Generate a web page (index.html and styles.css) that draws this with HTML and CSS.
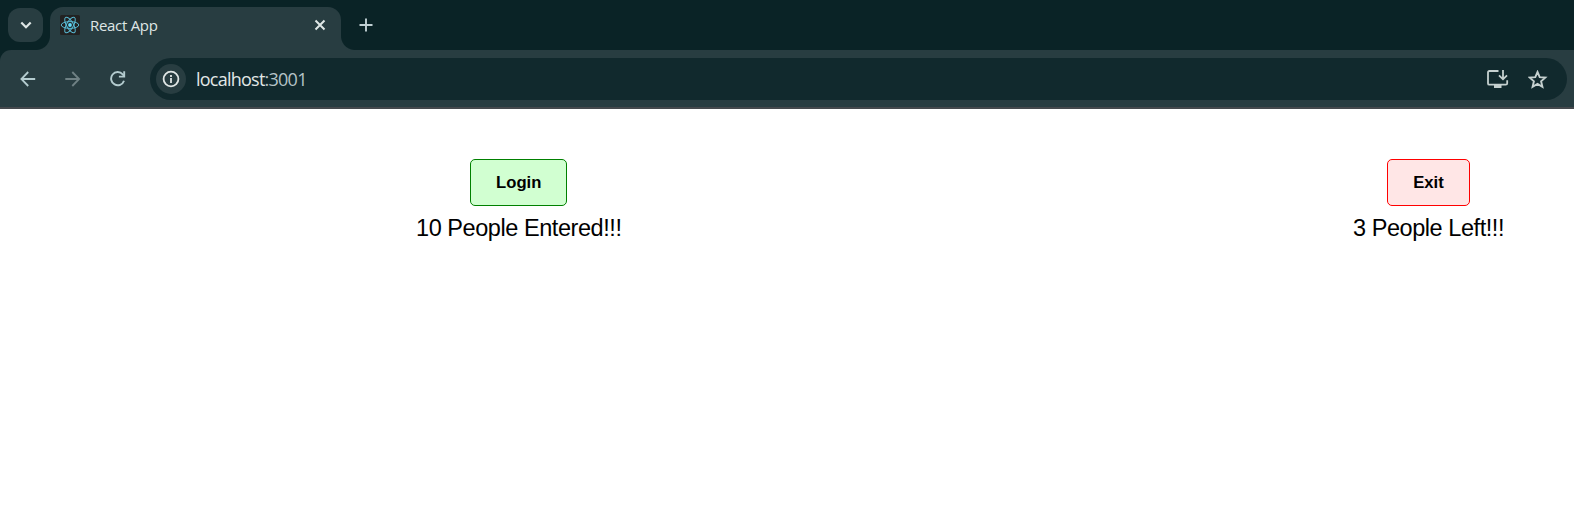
FILE: index.html
```html
<!DOCTYPE html>
<html lang="en">
<head>
<meta charset="utf-8">
<title>React App</title>
<link rel="stylesheet" href="styles.css">
</head>
<body>
<header class="browser">
  <div class="tabstrip">
    <div class="tab-search"><svg width="35" height="34" viewBox="0 0 35 34"><path d="M13.3 14.5l4.7 4.7 4.7-4.7" fill="none" stroke="#dfe7e6" stroke-width="2.2"/></svg></div>
    <div class="tab">
      <svg class="favicon" width="20" height="20" viewBox="0 0 20 20"><rect width="20" height="20" rx="1.5" fill="#222"/><g fill="none" stroke="#58bad4" stroke-width="1"><ellipse cx="10" cy="10" rx="8.8" ry="3.4"/><ellipse cx="10" cy="10" rx="8.8" ry="3.4" transform="rotate(60 10 10)"/><ellipse cx="10" cy="10" rx="8.8" ry="3.4" transform="rotate(120 10 10)"/></g><circle cx="10" cy="10" r="1.9" fill="#61dafb"/></svg>
      <span class="tab-title">React App</span>
      <svg class="close" width="12" height="12" viewBox="0 0 12 12"><path d="M1.5 1.5l9 9M10.5 1.5l-9 9" stroke="#dfe7e6" stroke-width="2"/></svg>
    </div>
    <svg class="new-tab" width="14" height="14" viewBox="0 0 14 14"><path d="M7 .5v13M.5 7h13" stroke="#c0d0d3" stroke-width="1.9"/></svg>
  </div>
  <div class="toolbar">
    <svg class="back" width="16" height="16" viewBox="0 0 16 16"><path d="M15.2 8H1.7M8.2 1L1.4 8l6.8 7" fill="none" stroke="#b4cccf" stroke-width="1.8"/></svg>
    <svg class="forward" width="16" height="16" viewBox="0 0 16 16"><path d="M.3 8h13.5M7.3 1l6.8 7-6.8 7" fill="none" stroke="#6f8184" stroke-width="1.8"/></svg>
    <svg class="reload" width="16" height="16" viewBox="0 0 16 16"><path d="M14 9.7A6.6 6.6 0 1 1 12.7 3.3L14 4.8" fill="none" stroke="#b4cccf" stroke-width="1.9"/><path d="M14.2.2v5.4H8.9" fill="none" stroke="#b4cccf" stroke-width="1.9"/></svg>
    <div class="omnibox">
      <div class="site-info"><svg width="18" height="18" viewBox="0 0 18 18"><circle cx="9" cy="9" r="7.4" fill="none" stroke="#e0e6e5" stroke-width="1.8"/><path d="M9 8v5M9 5v1.9" stroke="#e0e6e5" stroke-width="1.8"/></svg></div>
      <div class="url">localhost<span class="port">:3001</span></div>
      <svg class="install" width="22" height="18" viewBox="0 0 22 18"><path d="M11.5 1H2.4Q1 1 1 2.4v11q0 1.3 1.4 1.3h16.4q1.4 0 1.4-1.4V10.3" fill="none" stroke="#c5d0cf" stroke-width="1.8"/><path d="M7 14h7.5v4H7z" fill="#c5d0cf"/><path d="M16 0v9M12 5.3l4 4 4-4" fill="none" stroke="#c5d0cf" stroke-width="1.8"/></svg>
      <svg class="star" width="20" height="19" viewBox="0 0 20 19"><path d="M9.5 2l2.2 5.1 5.6.5-4.2 3.7 1.3 5.5-4.9-2.9-4.9 2.9 1.3-5.5-4.2-3.7 5.6-.5z" fill="none" stroke="#c5d0cf" stroke-width="1.9"/></svg>
    </div>
  </div>
</header>
<main class="page">
  <section class="counter">
    <button class="btn login">Login</button>
    <div class="message">10 People Entered!!!</div>
  </section>
  <section class="counter">
    <button class="btn exit">Exit</button>
    <div class="message">3 People Left!!!</div>
  </section>
</main>
</body>
</html>
```
FILE: styles.css
```css
* { box-sizing: border-box; }
body { margin: 0; background: #fff; overflow: hidden; font-family: "Liberation Sans", Arial, sans-serif; color: #000; }
svg { display: block; flex: none; }
.browser { height: 109px; background: #0a2326; font-family: "Open Sans", "Noto Sans", sans-serif; }
.tabstrip { height: 50px; display: flex; padding: 7px 0 0 8px; }
.tab-search { width: 35px; height: 34px; margin: 1px 7px 0 0; border-radius: 12px; background: #283d41; }
.tab { position: relative; width: 291px; height: 43px; display: flex; padding: 8px 15px 0 10px; border-radius: 13px 13px 0 0; background: #283d41; }
.tab::before, .tab::after { content: ""; position: absolute; bottom: 0; width: 14px; height: 14px; }
.tab::before { left: -14px; background: radial-gradient(circle at 0 0, transparent 13.5px, #283d41 14.5px); }
.tab::after { right: -14px; background: radial-gradient(circle at 100% 0, transparent 13.5px, #283d41 14.5px); }
.tab-title { margin-left: 10px; line-height: 21px; font-size: 15px; letter-spacing: -0.3px; color: #dfe6e5; white-space: nowrap; }
.close { margin: 4px 0 0 auto; }
.new-tab { margin: 11px 0 0 18px; }
.toolbar { height: 59px; display: flex; padding: 8px 7px 0 20px; border-bottom: 2px solid #45494d; border-radius: 11px 0 0 0; background: #283d41; }
.back, .forward, .reload { margin-top: 13px; }
.forward, .reload { margin-left: 29px; }
.omnibox { flex: 1; height: 42px; margin-left: 24px; display: flex; padding: 6px 19px 0 6px; border-radius: 21px; background: #11292d; }
.site-info { width: 30px; height: 30px; padding: 6px; border-radius: 50%; background: #283d41; }
.url { margin-left: 10px; line-height: 30px; font-size: 18px; letter-spacing: -0.76px; color: #e1e7e6; }
.port { color: #b5c3c7; }
.install { margin: 6px 0 0 auto; }
.star { margin: 6px 0 0 19px; }
.page { display: flex; justify-content: space-between; padding: 50px 70px 0 416px; }
.counter { display: flex; flex-direction: column; align-items: center; }
.btn { height: 47px; padding: 0 25px; border: 1px solid; border-radius: 5px; font: bold 16.67px "Liberation Sans", Arial, sans-serif; color: #000; }
.login { border-color: #008000; background: #d1ffd1; }
.exit { border-color: #f00; background: #ffe6e6; }
.message { margin-top: 9px; font-size: 23.5px; line-height: 26px; letter-spacing: -0.44px; white-space: nowrap; }
```
